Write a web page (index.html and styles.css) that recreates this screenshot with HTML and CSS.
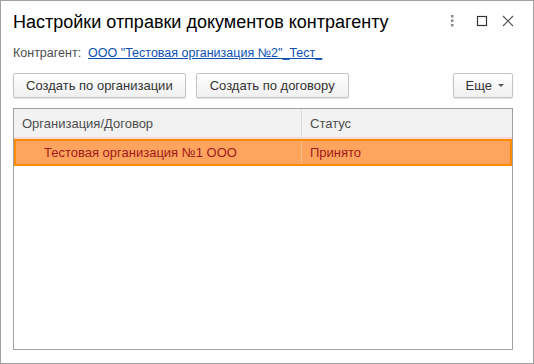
FILE: index.html
```html
<!DOCTYPE html>
<html>
<head>
<meta charset="utf-8">
<link rel="stylesheet" href="styles.css">
</head>
<body>
<div class="window">
  <div class="titlebar">
    <div class="title">Настройки отправки документов контрагенту</div>
    <div class="controls">
      <svg class="ico dots" width="14" height="14" viewBox="0 0 14 14"><rect x="6" y="1" width="2.5" height="2.5" fill="#8a8a8a"/><rect x="6" y="5.5" width="2.5" height="2.5" fill="#8a8a8a"/><rect x="6" y="10" width="2.5" height="2.5" fill="#8a8a8a"/></svg>
      <svg class="ico" width="14" height="14" viewBox="0 0 14 14"><rect x="2.5" y="2.5" width="9" height="9" fill="none" stroke="#333" stroke-width="1.2"/></svg>
      <svg class="ico" width="14" height="14" viewBox="0 0 14 14"><path d="M2 2 L12 12 M12 2 L2 12" stroke="#555" stroke-width="1.2"/></svg>
    </div>
  </div>
  <div class="field">
    <span class="label">Контрагент:</span>
    <a class="link" href="#">ООО "Тестовая организация №2"_Тест_</a>
  </div>
  <div class="toolbar">
    <button class="btn first">Создать по организации</button>
    <button class="btn">Создать по договору</button>
    <div class="spacer"></div>
    <button class="btn more">Еще <span class="caret"></span></button>
  </div>
  <div class="table">
    <div class="thead">
      <div class="cell c1">Организация/Договор</div>
      <div class="cell c2">Статус</div>
    </div>
    <div class="row sel">
      <div class="cell c1 indent">Тестовая организация №1 ООО</div>
      <div class="cell c2">Принято</div>
    </div>
  </div>
</div>
</body>
</html>
```
FILE: styles.css
```css
html, body {
  margin: 0;
  padding: 0;
  background: #fff;
}
.window {
  width: 534px;
  height: 364px;
  box-sizing: border-box;
  border: 1px solid #a0a0a0;
  font-family: "Liberation Sans", Arial, sans-serif;
  color: #333;
  display: flex;
  flex-direction: column;
  padding: 0 20px 13px 12px;
}
.titlebar {
  display: flex;
  align-items: center;
  height: 40px;
  margin-right: -2px;
}
.title {
  font-size: 18px;
  color: #000;
  flex: 1;
  padding-top: 2px;
}
.controls {
  display: flex;
  gap: 12px;
  align-items: center;
}
.ico { display: block; }
.ico.dots { margin-right: 4px; }
.field {
  font-size: 12.5px;
  height: 22px;
  display: flex;
  align-items: center;
  gap: 7px;
  margin-top: 1px;
  margin-bottom: 2px;
}
.label { color: #4d4d4d; }
.link {
  color: #0b4fb3;
  text-decoration: underline;
}
.toolbar {
  display: flex;
  margin-top: 7px;
  gap: 10px;
  height: 25px;
}
.spacer { flex: 1; }
.btn {
  font-family: "Liberation Sans", Arial, sans-serif;
  font-size: 13px;
  color: #333;
  height: 25px;
  border: 1px solid #c4c4c4;
  border-radius: 2px;
  background: linear-gradient(#ffffff, #f0f0f0);
  box-shadow: 0 1px 1px rgba(0,0,0,0.12);
  padding: 0 13px;
  margin: 0;
}
.btn.first { padding: 0 12px; }
.btn.more {
  padding: 0 8px 0 12px;
  display: flex;
  align-items: center;
  gap: 6px;
}
.caret {
  width: 0;
  height: 0;
  border-left: 3px solid transparent;
  border-right: 3px solid transparent;
  border-top: 3px solid #555;
}
.table {
  margin-top: 10px;
  flex: 1;
  border: 1px solid #a0a0a0;
  display: flex;
  flex-direction: column;
}
.thead {
  display: flex;
  height: 30px;
  background: #f2f2f2;
  border-bottom: 2px solid #f4d7d7;
  box-sizing: border-box;
}
.cell {
  display: flex;
  align-items: center;
  font-size: 13px;
  padding-left: 8px;
  box-sizing: border-box;
}
.c1 { width: 288px; border-right: 1px solid #dcdcdc; }
.c2 { flex: 1; }
.thead .cell { color: #4d4d4d; }
.row {
  display: flex;
  height: 27px;
  box-sizing: border-box;
}
.row.sel {
  background: #ffa45e;
  border: 2px solid #ff8c00;
  color: #a01a1a;
}
.row.sel .c1 { border-right: 1px solid #ffbe8c; width: 286px; }
.row .indent { padding-left: 28px; }
.row .c2 { padding-left: 8px; }
```
